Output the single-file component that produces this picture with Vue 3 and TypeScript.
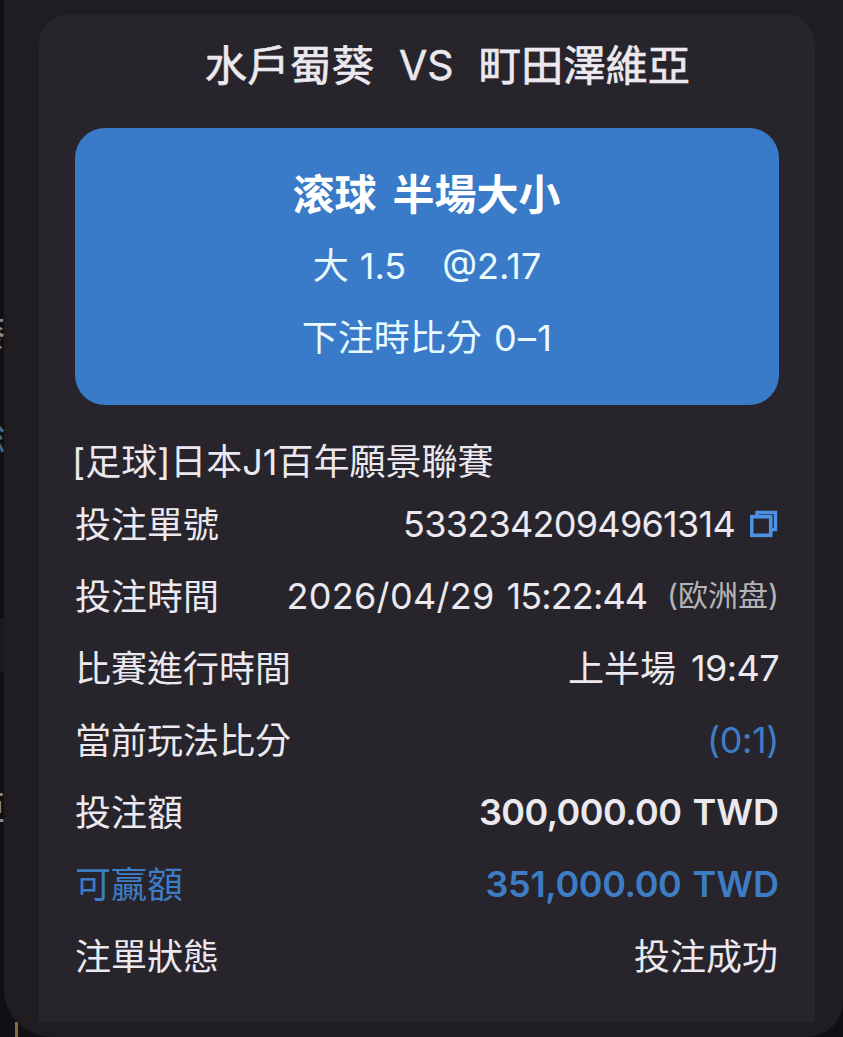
<script setup lang="ts">
interface Row {
  key: string
  label: string
  parts: string[]
  note?: string
  copy?: boolean
  accentLabel?: boolean
}

const teams = { home: '水戶蜀葵', away: '町田澤維亞' }
const rows: Row[] = [
  { key: 'id', label: '投注單號', parts: ['5332342094961314'], copy: true },
  { key: 'time', label: '投注時間', parts: ['2026/04/29', '15:22:44'], note: '(欧洲盘)' },
  { key: 'clock', label: '比賽進行時間', parts: ['上半場', '19:47'] },
  { key: 'score', label: '當前玩法比分', parts: ['(0:1)'] },
  { key: 'stake', label: '投注額', parts: ['300,000.00', 'TWD'] },
  { key: 'win', label: '可贏額', parts: ['351,000.00', 'TWD'], accentLabel: true },
  { key: 'status', label: '注單狀態', parts: ['投注成功'] },
]
</script>

<template>
  <div class="screen">
    <div class="behind">
      <span class="ghost g1">葵</span>
      <span class="ghost g2">総</span>
      <span class="band"></span>
      <span class="ghost g3">亞</span>
      <span class="gold"></span>
    </div>
    <div class="sheet">
      <section class="card">
        <h1 class="teams">
          <span class="team">{{ teams.home }}</span>
          <span class="vs">VS</span>
          <span class="team">{{ teams.away }}</span>
        </h1>
        <div class="pick">
          <div class="market"><span>滚球</span><span>半場大小</span></div>
          <div class="odds"><span>大 1.5</span><span>@2.17</span></div>
          <div class="placed"><span>下注時比分</span><span class="at">0–1</span></div>
        </div>
        <div class="league">[足球]日本J1百年願景聯賽</div>
        <div v-for="row in rows" :key="row.key" class="row" :class="row.key">
          <span class="label" :class="{ accent: row.accentLabel }">{{ row.label }}</span>
          <span class="value">
            <span v-for="part in row.parts" :key="part" class="text">{{ part }}</span>
            <span v-if="row.note" class="note">{{ row.note }}</span>
            <svg v-if="row.copy" class="copy" width="28" height="28" viewBox="0 0 28 28">
              <path d="M7 5V2.5H25.5V19.5H22" fill="none" stroke="#4b92e5" stroke-width="3.4" />
              <rect x="1.7" y="6.7" width="19" height="18.6" fill="none" stroke="#4b92e5" stroke-width="3.6" />
            </svg>
          </span>
        </div>
      </section>
    </div>
  </div>
</template>

<style>
body {
  background: #101014;
}
</style>

<style scoped>
.screen {
  position: relative;
  width: 843px;
  height: 1037px;
  overflow: hidden;
  background: #101014;
  color: #ebe9ef;
  font-family: Inter, "Noto Sans CJK TC", sans-serif;
  font-size: 36px;
  font-weight: 380;
}
.behind {
  position: absolute;
  inset: 0;
}
.ghost {
  position: absolute;
  left: -29px;
  font-size: 34px;
  line-height: 40px;
  font-weight: 500;
  color: #8a8a8d;
}
.g1 { top: 314px; }
.g2 { top: 419px; color: #456c8a; }
.g3 { top: 788px; }
.band {
  position: absolute;
  left: 0;
  top: 618px;
  width: 4px;
  height: 55px;
  background: #151b20;
}
.gold {
  position: absolute;
  left: 15px;
  top: 1022px;
  width: 20px;
  height: 30px;
  border-left: 3px solid #8a693b;
}
.sheet {
  position: relative;
  box-sizing: border-box;
  height: 1037px;
  margin-left: 4px;
  padding: 14px 28px 0 35px;
  background: #1f1c22;
  border-radius: 0 0 36px 48px;
}
.card {
  box-sizing: border-box;
  height: 1008px;
  padding: 0 36px;
  background: #27252b;
  border-radius: 30px 30px 0 0;
}
.teams {
  display: flex;
  justify-content: center;
  align-items: center;
  height: 104px;
  margin: 0;
  padding-left: 41px;
  font-size: 42.3px;
  font-weight: 400;
  white-space: nowrap;
}
.team {
  padding-bottom: 7px;
  -webkit-text-stroke: 0.7px currentColor;
}
.vs {
  margin: 0 25px;
  padding-bottom: 2px;
  font-size: 41px;
  -webkit-text-stroke: 0.5px currentColor;
}
.pick {
  height: 277px;
  margin-top: 10px;
  box-sizing: border-box;
  padding-top: 31px;
  border-radius: 30px;
  background: #397bc9;
  color: #e9fbff;
  text-align: center;
}
.market {
  display: flex;
  justify-content: center;
  gap: 16px;
  height: 72px;
  line-height: 72px;
  padding-right: 1px;
  font-size: 42px;
  font-weight: 700;
  color: #fff;
}
.odds {
  display: flex;
  justify-content: center;
  gap: 36px;
  line-height: 71px;
  word-spacing: 1px;
}
.placed {
  display: flex;
  justify-content: center;
  gap: 12px;
  line-height: 72px;
}
.at {
  letter-spacing: 1.3px;
  margin-right: -1px;
}
.league {
  height: 83px;
  line-height: 72px;
  padding-top: 21px;
  margin-left: -3px;
  box-sizing: border-box;
  white-space: nowrap;
}
.row {
  display: flex;
  justify-content: space-between;
  align-items: center;
  height: 72px;
  white-space: nowrap;
}
.label,
.status .text {
  padding-bottom: 4px;
}
.status .text {
  margin-right: 1px;
}
.value {
  display: flex;
  align-items: center;
}
.id .text {
  letter-spacing: -0.72px;
}
.time .text {
  letter-spacing: -0.9px;
}
.time .text:first-child {
  letter-spacing: 0.3px;
  margin-right: 12px;
}
.clock .text {
  letter-spacing: -0.6px;
}
.clock .text:first-child {
  padding-bottom: 4px;
  letter-spacing: 0;
  margin-right: 15px;
}
.score .text {
  letter-spacing: -0.4px;
}
.stake .text:first-child {
  letter-spacing: -0.55px;
  margin-right: 11px;
}
.win .text:first-child {
  letter-spacing: -0.35px;
  margin-right: 11px;
}
.copy {
  margin: 0 1px 0 15px;
}
.note {
  margin-left: 20px;
  padding-bottom: 6px;
  font-size: 30px;
  color: #b5b3b8;
  font-family: Inter, "Noto Sans CJK SC", sans-serif;
}
.score .value,
.accent,
.win .value {
  color: #3e7dc6;
}
.stake .value,
.win .value {
  font-weight: 600;
}
</style>
